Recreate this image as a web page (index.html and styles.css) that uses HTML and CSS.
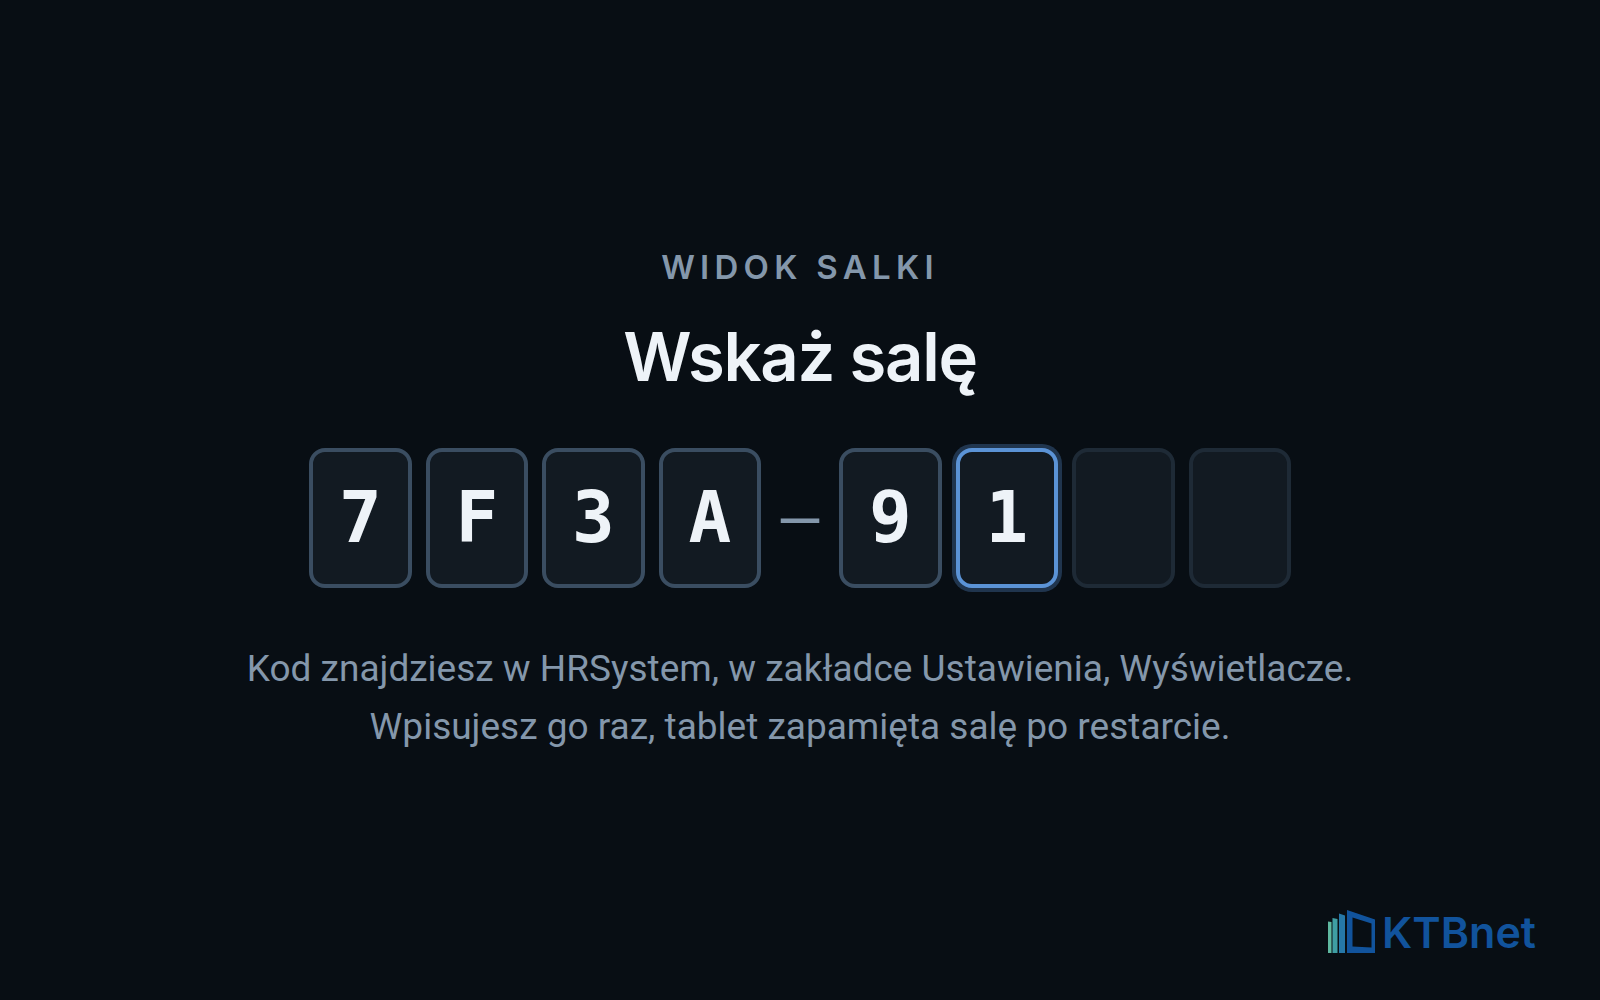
FILE: index.html
```html
<!DOCTYPE html>
<html lang="pl">
<head>
    <meta charset="UTF-8">
    <meta name="viewport" content="width=device-width, initial-scale=1.0">
    <title>Widok salki</title>
    <link rel="stylesheet" href="styles.css">
</head>
<body>
    <main class="setup">
        <p class="eyebrow">Widok salki</p>
        <h1>Wskaż salę</h1>
        <form class="code" autocomplete="off">
            <input class="cell filled" type="text" maxlength="1" value="7" aria-label="Znak 1">
            <input class="cell filled" type="text" maxlength="1" value="F" aria-label="Znak 2">
            <input class="cell filled" type="text" maxlength="1" value="3" aria-label="Znak 3">
            <input class="cell filled" type="text" maxlength="1" value="A" aria-label="Znak 4">
            <span class="dash">–</span>
            <input class="cell filled" type="text" maxlength="1" value="9" aria-label="Znak 5">
            <input class="cell filled current" type="text" maxlength="1" value="1" aria-label="Znak 6">
            <input class="cell" type="text" maxlength="1" aria-label="Znak 7">
            <input class="cell" type="text" maxlength="1" aria-label="Znak 8">
        </form>
        <p class="hint">Kod znajdziesz w HRSystem, w zakładce Ustawienia, Wyświetlacze.<br>Wpisujesz go raz, tablet zapamięta salę po restarcie.</p>
    </main>
    <footer class="brand">
        <svg width="48" height="44" viewBox="0 0 48 44" aria-hidden="true">
            <path fill="#5fb8a0" d="M0 11.500 3.500 12V43H0z"/>
            <path fill="#3f9ea3" d="M4.500 8 9.500 9V43H4.500z"/>
            <path fill="#2678a8" d="M11 3.500 17 5.500V43H11z"/>
            <path fill="#11539c" fill-rule="evenodd" d="M19 0 47 9.500V43H19zM24.500 7.500V36.500L43.500 37.500V13.500z"/>
        </svg>
        <span class="brand-name">KTBnet</span>
    </footer>
</body>
</html>
```
FILE: styles.css
```css
:root {
    --bg: #080e14;
    --cell-bg: #121a22;
    --cell-border: #1e2a36;
    --cell-border-filled: #3a4d61;
    --accent: #5b93d6;
    --text: #eef3f8;
    --muted: #8497ab;
    --brand: #11539c;
}
* {
    box-sizing: border-box;
}
body {
    position: relative;
    display: flex;
    min-height: 100vh;
    margin: 0;
    background: var(--bg);
    color: var(--text);
    font-family: Inter, "Liberation Sans", sans-serif;
}
.setup {
    flex: 1;
    display: flex;
    flex-direction: column;
    align-items: center;
    justify-content: center;
    padding: 0 24px;
    text-align: center;
}
.eyebrow {
    margin: 0 0 28px;
    color: var(--muted);
    font-size: 33px;
    font-weight: 600;
    line-height: 46px;
    letter-spacing: 0.16em;
    text-transform: uppercase;
}
h1 {
    margin: 0 0 52px;
    font-size: 67px;
    font-weight: 600;
    line-height: 78px;
    letter-spacing: -0.02em;
}
.code {
    display: grid;
    grid-template-columns: repeat(4, 1fr) 50px repeat(4, 1fr);
    align-items: center;
    gap: 14px;
    width: 100%;
    max-width: 982px;
    margin-bottom: 52px;
}
.cell {
    width: 100%;
    min-width: 0;
    height: 140px;
    padding: 0 0 2px;
    border: 4px solid var(--cell-border);
    border-radius: 16px;
    outline: none;
    background: var(--cell-bg);
    color: var(--text);
    font-family: "DejaVu Sans Mono", monospace;
    font-size: 71px;
    font-weight: 700;
    text-align: center;
}
.cell.filled {
    border-color: var(--cell-border-filled);
}
.cell.current,
.cell:focus {
    border-color: var(--accent);
    box-shadow: 0 0 0 4px rgba(91, 147, 214, 0.3);
}
.dash {
    padding-bottom: 4px;
    color: var(--muted);
    font-family: "DejaVu Sans Mono", monospace;
    font-size: 64px;
}
.hint {
    margin: 0;
    color: var(--muted);
    font-family: Roboto, "Liberation Sans", sans-serif;
    font-size: 37px;
    line-height: 58px;
}
.brand {
    position: absolute;
    right: 64px;
    bottom: 46px;
    display: flex;
    align-items: center;
    gap: 6px;
}
.brand-name {
    color: var(--brand);
    font-size: 43px;
    font-weight: 600;
    line-height: 44px;
}
```
